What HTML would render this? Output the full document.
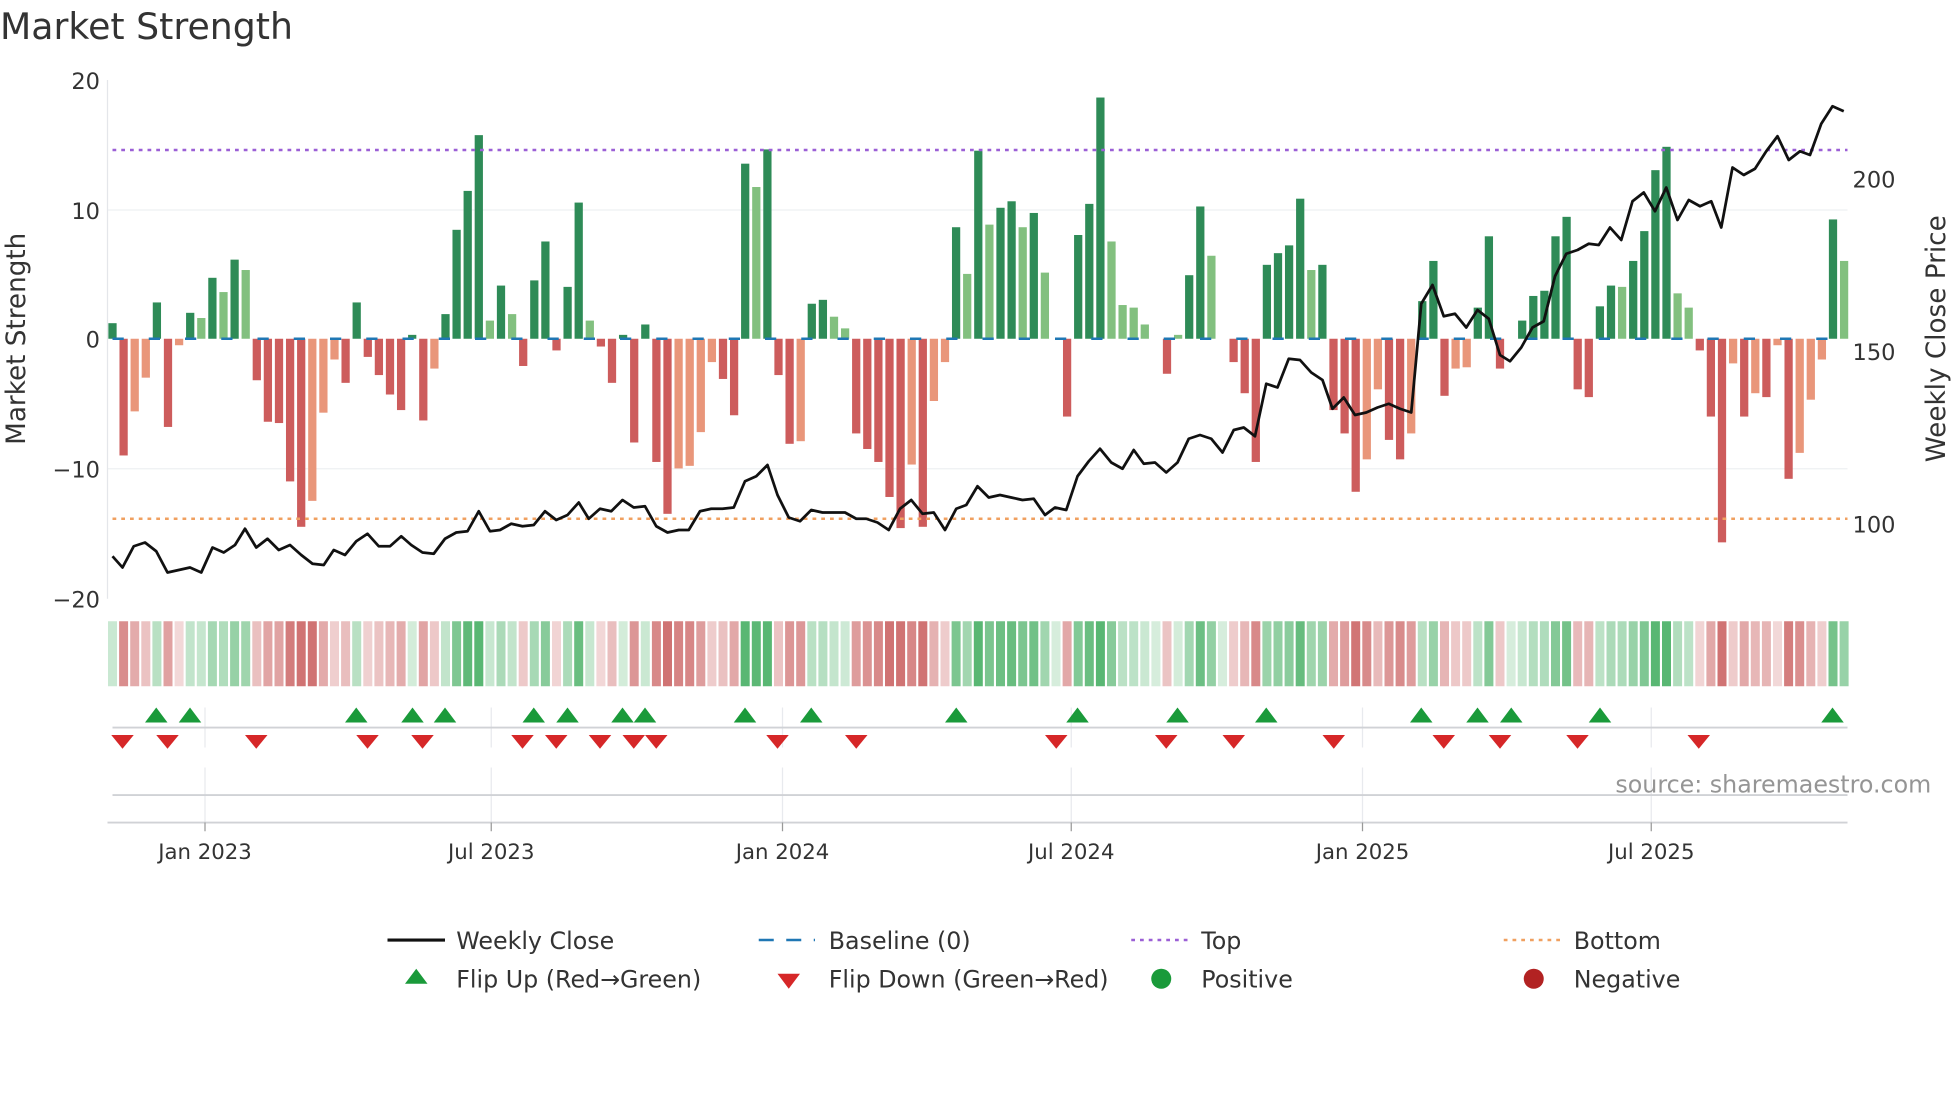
<!DOCTYPE html>
<html><head><meta charset="utf-8"><style>
html,body{margin:0;padding:0;background:#fff;width:1960px;height:1102px;overflow:hidden}
svg{display:block}
text{font-family:"DejaVu Sans","Liberation Sans",sans-serif;fill:#333}
</style></head><body>
<svg id="c" width="1960" height="1102" viewBox="0 0 1568 881.6" xmlns="http://www.w3.org/2000/svg">
<text x="0" y="31" font-size="29">Market Strength</text>
<line x1="86" y1="168" x2="1478" y2="168" stroke="#eef0f2" stroke-width="1"/>
<line x1="86" y1="375" x2="1478" y2="375" stroke="#eef0f2" stroke-width="1"/>
<line x1="86" y1="64" x2="86" y2="479" stroke="#e4e6ea" stroke-width="1"/>
<g id="bars"></g>
<line x1="90" y1="271" x2="1478" y2="271" stroke="#1f77b4" stroke-width="2" stroke-dasharray="9,20"/>
<line x1="90" y1="120" x2="1478" y2="120" stroke="#9b5fd6" stroke-width="2" stroke-dasharray="3,4"/>
<line x1="90" y1="415" x2="1478" y2="415" stroke="#f0a060" stroke-width="2" stroke-dasharray="3,4"/>
<polyline id="price" fill="none" stroke="#111" stroke-width="2.2" stroke-linejoin="round"/>
<g font-size="18" text-anchor="end">
<text x="80" y="71">20</text><text x="80" y="175">10</text><text x="80" y="278">0</text><text x="80" y="382">−10</text><text x="80" y="486">−20</text>
</g>
<g font-size="18">
<text x="1482" y="150">200</text><text x="1482" y="288">150</text><text x="1482" y="426">100</text>
</g>
<text font-size="21" text-anchor="middle" transform="translate(20,271) rotate(-90)">Market Strength</text>
<text font-size="21" text-anchor="middle" transform="translate(1556,271) rotate(-90)">Weekly Close Price</text>
<g id="heat"></g>
<g stroke="#e8eaee" stroke-width="1">
<line x1="164" y1="566" x2="164" y2="598"/><line x1="393" y1="566" x2="393" y2="598"/><line x1="626" y1="566" x2="626" y2="598"/><line x1="857" y1="566" x2="857" y2="598"/><line x1="1090" y1="566" x2="1090" y2="598"/><line x1="1321" y1="566" x2="1321" y2="598"/>
<line x1="164" y1="614" x2="164" y2="658"/><line x1="393" y1="614" x2="393" y2="658"/><line x1="626" y1="614" x2="626" y2="658"/><line x1="857" y1="614" x2="857" y2="658"/><line x1="1090" y1="614" x2="1090" y2="658"/><line x1="1321" y1="614" x2="1321" y2="658"/>
</g>
<line x1="90" y1="582" x2="1478" y2="582" stroke="#d0d2d6" stroke-width="1.5"/>
<line x1="90" y1="636" x2="1478" y2="636" stroke="#d0d2d6" stroke-width="1.5"/>
<line x1="86" y1="658" x2="1478" y2="658" stroke="#d0d2d6" stroke-width="1.5"/>
<g id="marks"></g>
<g stroke="#999" stroke-width="1">
<line x1="164" y1="658" x2="164" y2="665"/><line x1="393" y1="658" x2="393" y2="665"/><line x1="626" y1="658" x2="626" y2="665"/><line x1="857" y1="658" x2="857" y2="665"/><line x1="1090" y1="658" x2="1090" y2="665"/><line x1="1321" y1="658" x2="1321" y2="665"/>
</g>
<g font-size="17" text-anchor="middle">
<text x="164" y="687">Jan 2023</text><text x="393" y="687">Jul 2023</text><text x="626" y="687">Jan 2024</text><text x="857" y="687">Jul 2024</text><text x="1090" y="687">Jan 2025</text><text x="1321" y="687">Jul 2025</text>
</g>
<text x="1545" y="634" font-size="19" text-anchor="end" style="fill:#959595">source: sharemaestro.com</text>
<g font-size="19">
<line x1="310" y1="752" x2="356" y2="752" stroke="#111" stroke-width="2.5"/>
<text x="365" y="759">Weekly Close</text>
<line x1="607" y1="752" x2="652" y2="752" stroke="#1f77b4" stroke-width="2" stroke-dasharray="12,10"/>
<text x="663" y="759">Baseline (0)</text>
<line x1="905" y1="752" x2="950" y2="752" stroke="#9b5fd6" stroke-width="2" stroke-dasharray="3,4"/>
<text x="961" y="759">Top</text>
<line x1="1203" y1="752" x2="1248" y2="752" stroke="#f0a060" stroke-width="2" stroke-dasharray="3,4"/>
<text x="1259" y="759">Bottom</text>
<polygon points="324,787 342,787 333,775" fill="#1a9a3a"/>
<text x="365" y="790">Flip Up (Red→Green)</text>
<polygon points="622,779 640,779 631,791" fill="#d62728"/>
<text x="663" y="790">Flip Down (Green→Red)</text>
<circle cx="929" cy="783" r="8" fill="#1a9a3a"/>
<text x="961" y="790">Positive</text>
<circle cx="1227" cy="783" r="8" fill="#b22222"/>
<text x="1259" y="790">Negative</text>
</g>
</svg>
<script>
var v=[1.2,-9,-5.6,-3,2.8,-6.8,-0.5,2,1.6,4.7,3.6,6.1,5.3,-3.2,-6.4,-6.5,-11,-14.5,-12.5,-5.7,-1.6,-3.4,2.8,-1.4,-2.8,-4.3,-5.5,0.3,-6.3,-2.3,1.9,8.4,11.4,15.7,1.4,4.1,1.9,-2.1,4.5,7.5,-0.9,4,10.5,1.4,-0.6,-3.4,0.3,-8,1.1,-9.5,-13.5,-10,-9.8,-7.2,-1.8,-3.1,-5.9,13.5,11.7,14.6,-2.8,-8.1,-7.9,2.7,3,1.7,0.8,-7.3,-8.5,-9.5,-12.2,-14.6,-9.7,-14.5,-4.8,-1.8,8.6,5,14.5,8.8,10.1,10.6,8.6,9.7,5.1,0,-6,8,10.4,18.6,7.5,2.6,2.4,1.1,0,-2.7,0.3,4.9,10.2,6.4,0,-1.8,-4.2,-9.5,5.7,6.6,7.2,10.8,5.3,5.7,-5.5,-7.3,-11.8,-9.3,-3.9,-7.8,-9.3,-7.3,2.9,6,-4.4,-2.3,-2.2,2.4,7.9,-2.3,0,1.4,3.3,3.7,7.9,9.4,-3.9,-4.5,2.5,4.1,4,6,8.3,13,14.8,3.5,2.4,-0.9,-6,-15.7,-1.9,-6,-4.2,-4.5,-0.5,-10.8,-8.8,-4.7,-1.6,9.2,6];
var light={2:1,3:1,6:1,8:1,10:1,12:1,18:1,19:1,20:1,29:1,34:1,36:1,43:1,51:1,52:1,53:1,54:1,58:1,62:1,65:1,66:1,72:1,74:1,75:1,77:1,79:1,82:1,84:1,90:1,91:1,92:1,93:1,96:1,99:1,108:1,113:1,114:1,117:1,121:1,122:1,136:1,141:1,142:1,146:1,148:1,150:1,152:1,153:1,154:1,156:1};
var NS="http://www.w3.org/2000/svg";
function el(n,a,p){var e=document.createElementNS(NS,n);for(var k in a)e.setAttribute(k,a[k]);document.getElementById(p).appendChild(e);return e;}
var dx=8.88,x0=90;
for(var i=0;i<v.length;i++){
 var x=x0+dx*i,h=v[i]*10.375,l=light[i];
 var col=v[i]>=0?(l?"#82c07f":"#2e8b57"):(l?"#e9967a":"#cd5c5c");
 if(Math.abs(h)>0.1) el("rect",{x:x-3.3,y:h>0?271-h:271,width:6.6,height:Math.abs(h),fill:col},"bars");
 var a=Math.min(1,0.25+Math.abs(v[i])/16);
 var hc=v[i]>=0?"rgba(60,170,90,"+(a*0.85)+")":"rgba(200,90,90,"+(a*0.85)+")";
 el("rect",{x:x-3.6,y:497,width:7.2,height:52,fill:hc},"heat");
}
var p=[[90,445],[98,454],[107,437],[116,434],[125,441],[134,458],[143,456],[152,454],[161,458],[170,438],[179,442],[188,436],[196,423],[205,438],[214,431],[223,440],[232,436],[241,444],[250,451],[259,452],[267,440],[276,444],[285,433],[294,427],[303,437],[312,437],[321,429],[329,436],[338,442],[347,443],[356,431],[365,426],[374,425],[383,409],[392,425],[400,424],[409,419],[418,421],[427,420],[436,409],[445,416],[454,412],[463,402],[471,415],[480,407],[489,409],[498,400],[507,406],[516,405],[525,421],[534,426],[543,424],[551,424],[560,409],[569,407],[578,407],[587,406],[596,385],[605,381],[614,372],[622,396],[631,414],[640,417],[649,408],[658,410],[667,410],[676,410],[685,415],[693,415],[702,418],[711,424],[720,407],[729,400],[738,411],[747,410],[756,424],[765,407],[773,404],[782,389],[791,398],[800,396],[809,398],[818,400],[827,399],[836,412],[844,406],[853,408],[862,381],[871,369],[880,359],[889,370],[898,375],[907,360],[915,371],[924,370],[933,378],[942,370],[951,351],[960,348],[969,351],[978,362],[987,344],[995,342],[1004,349],[1013,307],[1022,310],[1031,287],[1040,288],[1049,298],[1058,304],[1066,327],[1075,318],[1084,332],[1093,330],[1102,326],[1111,323],[1120,327],[1129,330],[1137,243],[1146,228],[1155,253],[1164,251],[1173,262],[1182,248],[1191,255],[1200,284],[1208,289],[1217,278],[1226,262],[1235,257],[1244,221],[1253,203],[1262,200],[1271,195],[1279,196],[1288,182],[1297,192],[1306,161],[1315,154],[1324,169],[1333,150],[1342,176],[1351,160],[1360,165],[1369,161],[1377,182],[1386,134],[1395,140],[1404,135],[1413,121],[1422,109],[1431,128],[1440,121],[1448,124],[1457,99],[1466,85],[1475,89]];
document.getElementById("price").setAttribute("points",p.map(function(q){return q.join(",")}).join(" "));
var up=[125,152,285,330,356,427,454,498,516,596,649,765,862,942,1013,1137,1182,1209,1280,1466];
var dn=[98,134,205,294,338,418,445,480,507,525,622,685,845,933,987,1067,1155,1200,1262,1359];
up.forEach(function(x){el("polygon",{points:(x-9)+",578 "+(x+9)+",578 "+x+",566",fill:"#1a9a3a"},"marks")});
dn.forEach(function(x){el("polygon",{points:(x-9)+",588 "+(x+9)+",588 "+x+",599",fill:"#d62728"},"marks")});
</script>
</body></html>
